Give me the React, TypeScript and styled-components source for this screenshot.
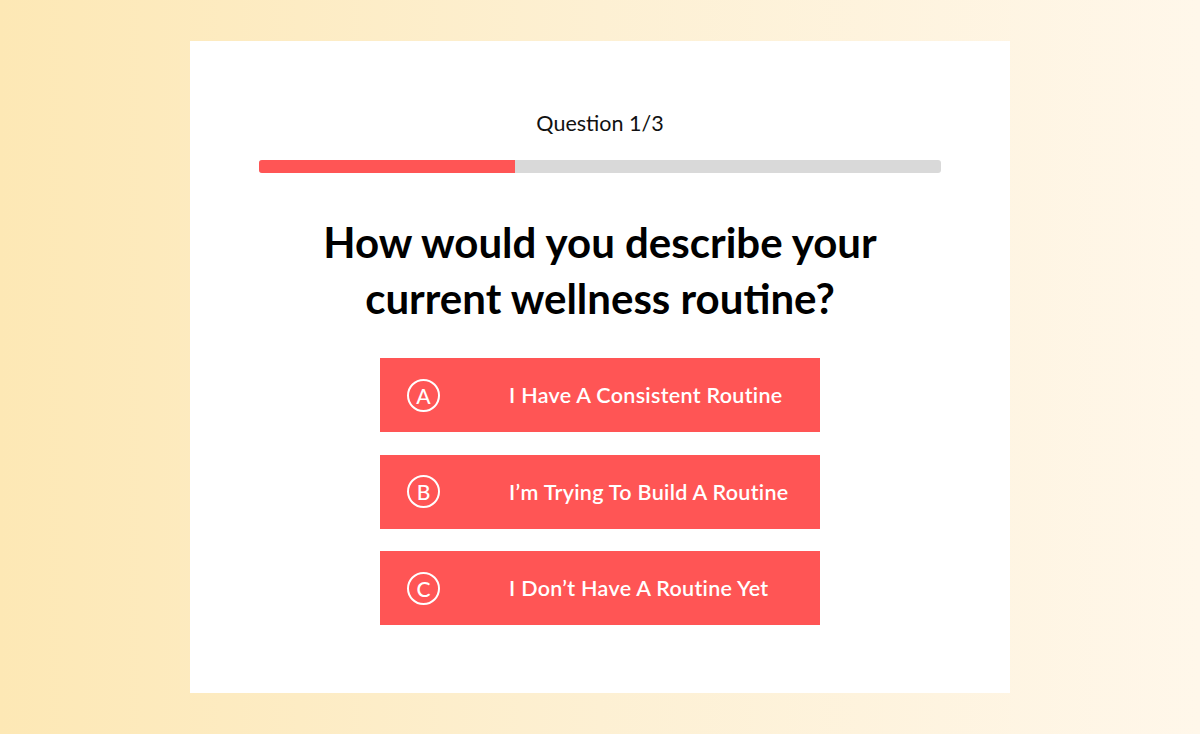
import React from "react";
import styled, { createGlobalStyle } from "styled-components";

const Global = createGlobalStyle`
  html, body { margin: 0; padding: 0; }
  body { font-family: "Lato", "Open Sans", sans-serif; }
  * { box-sizing: border-box; }
`;

const Page = styled.div`
  width: 100%;
  min-height: 100vh;
  display: flex;
  align-items: center;
  justify-content: center;
  background: linear-gradient(90deg, #fde8b5 0%, #fdf0d3 50%, #fff7ea 100%);
`;

const Card = styled.div`
  width: 820px;
  height: 652px;
  background: #ffffff;
  padding: 69px 69px 0;
  display: flex;
  flex-direction: column;
  align-items: center;
`;

const Label = styled.div`
  font-family: "Lato", sans-serif;
  font-size: 21.5px;
  line-height: 26px;
  color: #111;
`;

const Track = styled.div`
  margin-top: 24px;
  width: 100%;
  height: 13px;
  border-radius: 3px;
  background: #d9d9d9;
  overflow: hidden;
`;

const Fill = styled.div`
  height: 100%;
  background: #ff5555;
`;

const Heading = styled.h1`
  margin: 41px 0 0;
  font-family: "Lato", sans-serif;
  font-weight: 700;
  font-size: 42px;
  line-height: 56px;
  text-align: center;
  color: #000;
  max-width: 620px;
`;

const Options = styled.div`
  margin-top: 32px;
  display: flex;
  flex-direction: column;
  gap: 22.5px;
`;

const Option = styled.button`
  width: 440px;
  height: 74px;
  border: none;
  background: #ff5555;
  color: #fff;
  display: flex;
  align-items: center;
  padding: 0 0 0 27px;
  cursor: pointer;
  font-family: "Lato", sans-serif;
`;

const Badge = styled.span`
  width: 33px;
  height: 33px;
  border-radius: 50%;
  border: 2px solid #fff;
  display: flex;
  align-items: center;
  justify-content: center;
  font-size: 21px;
  font-weight: 500;
  flex-shrink: 0;
`;

const OptionText = styled.span`
  margin-left: 69px;
  font-size: 21.5px;
  font-weight: 600;
  letter-spacing: 0.3px;
`;

const options = [
  { key: "A", text: "I Have A Consistent Routine" },
  { key: "B", text: "I’m Trying To Build A Routine" },
  { key: "C", text: "I Don’t Have A Routine Yet" },
];

export default function App() {
  const progress = 37.5;
  return (
    <>
      <Global />
      <Page>
        <Card>
          <Label>Question 1/3</Label>
          <Track>
            <Fill style={{ width: `${progress}%` }} />
          </Track>
          <Heading>How would you describe your current wellness routine?</Heading>
          <Options>
            {options.map((o) => (
              <Option key={o.key}>
                <Badge>{o.key}</Badge>
                <OptionText>{o.text}</OptionText>
              </Option>
            ))}
          </Options>
        </Card>
      </Page>
    </>
  );
}
